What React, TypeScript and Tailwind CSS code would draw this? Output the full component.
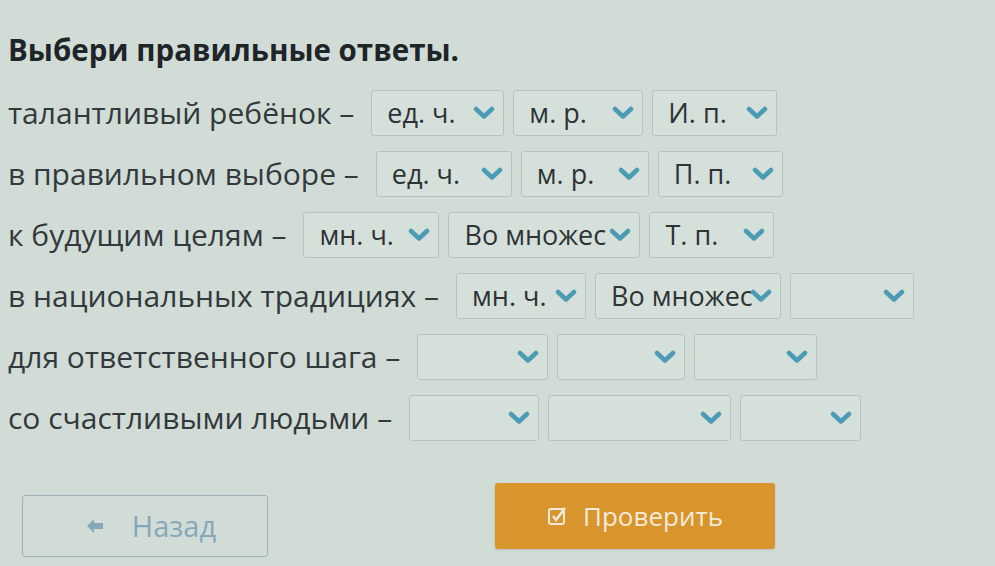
import React from "react";

const Chevron = () => (
  <svg width="22" height="14" viewBox="0 0 22 14" className="absolute right-[8px] top-1/2 -translate-y-1/2">
    <polyline points="3,3 11,10.5 19,3" fill="none" stroke="#4b9bb4" strokeWidth="4.5" strokeLinecap="round" strokeLinejoin="round" />
  </svg>
);

type Sel = { v: string; w: number };

const Select = ({ v, w }: Sel) => (
  <div
    className="relative flex h-[46px] shrink-0 items-center overflow-hidden rounded-[3px] border border-[#b4c4bf] bg-[#d6e0db] pl-[15px]"
    style={{ width: w }}
  >
    <span className="whitespace-nowrap text-[27px] leading-[36px] text-[#2e3336]">{v}</span>
    <Chevron />
  </div>
);

const rows: { label: string; sels: Sel[] }[] = [
  { label: "талантливый ребёнок –", sels: [{ v: "ед. ч.", w: 133 }, { v: "м. р.", w: 130 }, { v: "И. п.", w: 125 }] },
  { label: "в правильном выборе –", sels: [{ v: "ед. ч.", w: 136 }, { v: "м. р.", w: 128 }, { v: "П. п.", w: 125 }] },
  { label: "к будущим целям –", sels: [{ v: "мн. ч.", w: 136 }, { v: "Во множес", w: 192 }, { v: "Т. п.", w: 125 }] },
  { label: "в национальных традициях –", sels: [{ v: "мн. ч.", w: 130 }, { v: "Во множес", w: 186 }, { v: "", w: 124 }] },
  { label: "для ответственного шага –", sels: [{ v: "", w: 131 }, { v: "", w: 128 }, { v: "", w: 123 }] },
  { label: "со счастливыми людьми –", sels: [{ v: "", w: 130 }, { v: "", w: 183 }, { v: "", w: 121 }] },
];

export default function App() {
  return (
    <div
      className="h-[566px] w-[995px] overflow-hidden bg-[#d1dcd6] pl-[8px] pt-[30px]"
      style={{ fontFamily: '"Open Sans", "Noto Sans", sans-serif' }}
    >
      <h1 className="text-[29.5px] font-bold leading-[40px] text-[#1f2428]">Выбери правильные ответы.</h1>
      <div className="mt-[20px] flex flex-col gap-[15px]">
        {rows.map((r, i) => (
          <div key={i} className="flex items-center">
            <span className="mr-[17px] whitespace-nowrap text-[30px] leading-[40px] text-[#33393c]">{r.label}</span>
            <div className="flex gap-[9px]">
              {r.sels.map((s, j) => (
                <Select key={j} {...s} />
              ))}
            </div>
          </div>
        ))}
      </div>
      <div className="mt-[42px] flex items-start pl-[14px]">
        <div className="mt-[12px] flex h-[62px] w-[246px] items-center justify-center gap-[28px] rounded-[3px] border border-[#9db2ba] pl-[12px] text-[29px] text-[#86a8bb]">
          <svg width="18" height="16" viewBox="0 0 18 16">
            <path d="M1 8 L8 1 L8 5 L17 5 L17 11 L8 11 L8 15 Z" fill="#86a8bb" />
          </svg>
          <span className="leading-[36px]">Назад</span>
        </div>
        <div className="ml-[227px] flex h-[66px] w-[280px] items-center justify-center gap-[16px] rounded-[3px] bg-[#d8952d] text-[26px] text-[#f4ead9] shadow-sm">
          <svg width="20" height="20" viewBox="0 0 20 20">
            <rect x="2" y="3" width="15" height="15" rx="2" fill="none" stroke="#f4ead9" strokeWidth="2" />
            <path d="M6 10 L9 14 L18 2" fill="none" stroke="#f4ead9" strokeWidth="2.5" />
          </svg>
          <span className="leading-[36px]">Проверить</span>
        </div>
      </div>
    </div>
  );
}
